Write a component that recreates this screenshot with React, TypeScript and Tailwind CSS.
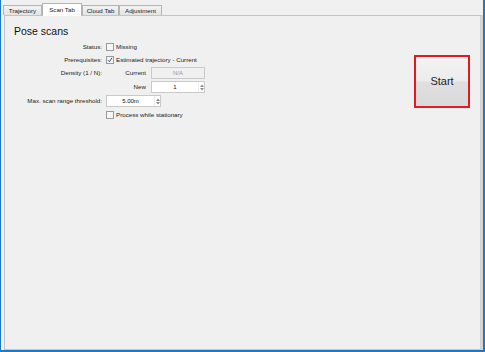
import React from "react";

const tabs = [
  { label: "Trajectory", w: "w-[39px]" },
  { label: "Scan Tab", w: "w-[40px]", active: true },
  { label: "Cloud Tab", w: "w-[37px]" },
  { label: "Adjustment", w: "w-[43px]" },
];

const CheckBox: React.FC<{ checked?: boolean }> = ({ checked }) => (
  <div className="w-[8px] h-[8px] border border-[#9a9a9a] bg-[#f6f6f6] flex items-center justify-center">
    {checked && (
      <svg width="6" height="6" viewBox="0 0 6 6">
        <path d="M1 3.2 L2.4 4.8 L5 0.8" fill="none" stroke="#27406e" strokeWidth="0.9" />
      </svg>
    )}
  </div>
);

const SpinBox: React.FC<{ value: string; w: string }> = ({ value, w }) => (
  <div className={`${w} h-[12px] border border-[#c9c9c9] bg-white flex`}>
    <div className="flex-1 flex items-center justify-center text-[6px] text-[#111]">{value}</div>
    <div className="w-[6px] flex flex-col items-center justify-center gap-[1px] border-l border-[#ececec]">
      <svg width="4" height="3" viewBox="0 0 4 3">
        <path d="M0 3 L2 0.5 L4 3 Z" fill="#8a8a8a" />
      </svg>
      <svg width="4" height="3" viewBox="0 0 4 3">
        <path d="M0 0 L2 2.5 L4 0 Z" fill="#8a8a8a" />
      </svg>
    </div>
  </div>
);

const Row: React.FC<{ label?: string; h: string; children?: React.ReactNode }> = ({ label, h, children }) => (
  <div className={`flex items-center ${h}`}>
    <div className="w-[92px] pr-[4px] text-right text-[6.2px] text-[#222]">{label}</div>
    {children}
  </div>
);

export default function App() {
  return (
    <div className="w-[485px] h-[352px] bg-[#f0f0f0] border-l border-r-2 border-b-2 border-[#1c78c8] flex flex-col font-['Liberation_Sans',Arial,sans-serif]">
      <div className="h-[15px] flex items-end pl-[2px] shrink-0">
        {tabs.map((t) =>
          t.active ? (
            <div
              key={t.label}
              className={`${t.w} h-[13px] -mb-[1px] relative z-10 bg-white border border-b-0 border-[#b4b4b4] flex items-center justify-center text-[6.2px] text-[#222]`}
            >
              {t.label}
            </div>
          ) : (
            <div
              key={t.label}
              className={`${t.w} h-[10px] bg-[linear-gradient(#f2f2f2,#e4e4e4)] border border-b-0 border-[#b4b4b4] flex items-center justify-center text-[6.2px] text-[#222]`}
            >
              {t.label}
            </div>
          )
        )}
      </div>

      <div className="flex-1 ml-[3px] border border-[#c4c4c4] border-r-[3px] border-r-[#d4d4d4] bg-[#f0f0f0] flex pl-[9px] pr-[10px] pt-[8px]">
        <div className="flex-1 flex flex-col">
          <div className="h-[16px] text-[10.5px] leading-[14px] text-[#111]">Pose scans</div>

          <Row label="Status:" h="h-[13px]">
            <CheckBox />
            <span className="ml-[2px] text-[6.2px] text-[#222]">Missing</span>
          </Row>

          <Row label="Prerequisites:" h="h-[13px]">
            <CheckBox checked />
            <span className="ml-[2px] text-[6.2px] text-[#222]">Estimated trajectory - Current</span>
          </Row>

          <Row label="Density (1 / N):" h="h-[14px]">
            <div className="w-[40px] text-right text-[6.2px] text-[#222]">Current</div>
            <div className="ml-[5px] w-[54px] h-[12px] border border-[#c9c9c9] bg-[#f0f0f0] flex items-center justify-center text-[6px] text-[#999]">
              N/A
            </div>
          </Row>

          <Row h="h-[14px]">
            <div className="w-[40px] text-right text-[6.2px] text-[#222]">New</div>
            <div className="ml-[5px]">
              <SpinBox value="1" w="w-[54px]" />
            </div>
          </Row>

          <Row label="Max. scan range threshold:" h="h-[14px]">
            <SpinBox value="5.00m" w="w-[55px]" />
          </Row>

          <Row h="h-[14px]">
            <CheckBox />
            <span className="ml-[2px] text-[6.2px] text-[#222]">Process while stationary</span>
          </Row>
        </div>

        <div className="pt-[31px]">
          <button className="w-[56px] h-[53px] border-2 border-[#e31b1f] bg-[linear-gradient(#f3f3f3_0%,#ececec_48%,#dfdfdf_52%,#d9d9d9_100%)] flex items-center justify-center text-[11px] text-[#1e1e1e]">
            Start
          </button>
        </div>
      </div>
    </div>
  );
}
